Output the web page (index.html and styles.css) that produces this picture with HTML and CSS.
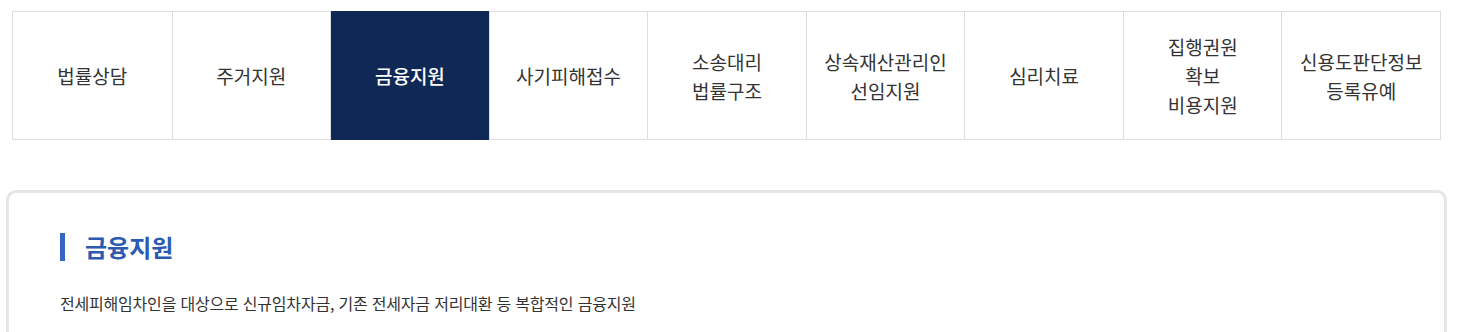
FILE: index.html
```html
<!DOCTYPE html>
<html lang="ko">

<head>
    <meta charset="UTF-8">
    <meta name="viewport" content="width=device-width, initial-scale=1.0">
    <title>금융지원</title>
    <link rel="stylesheet" href="styles.css">
</head>

<body>
    <section class="support-wrap">
        <ul class="support-tabs">
            <li><a href="#">법률상담</a></li>
            <li><a href="#">주거지원</a></li>
            <li class="on"><a href="#">금융지원</a></li>
            <li><a href="#">사기피해접수</a></li>
            <li><a href="#">소송대리<br>법률구조</a></li>
            <li><a href="#">상속재산관리인<br>선임지원</a></li>
            <li><a href="#">심리치료</a></li>
            <li><a href="#">집행권원<br>확보<br>비용지원</a></li>
            <li><a href="#">신용도판단정보<br>등록유예</a></li>
        </ul>

        <div class="support-box">
            <h3 class="support-title">금융지원</h3>
            <p class="support-desc">전세피해임차인을 대상으로 신규임차자금, 기존 전세자금 저리대환 등 복합적인 금융지원</p>
        </div>
    </section>
</body>

</html>
```

FILE: styles.css
```css
* {
    margin: 0;
    padding: 0;
    box-sizing: border-box;
}

body {
    font-family: "Noto Sans CJK KR", "Noto Sans", sans-serif;
    color: #333;
    background: #fff;
}

ul {
    list-style: none;
}

a {
    color: inherit;
    text-decoration: none;
}

.support-wrap {
    padding: 11px 14px 0 6px;
}

.support-tabs {
    display: grid;
    grid-template-columns: repeat(9, 1fr);
    height: 129px;
    margin: 0 6px 0 6px;
    border: 1px solid #dddddd;
}

.support-tabs>li {
    display: flex;
    align-items: center;
    justify-content: center;
    text-align: center;
    border-left: 1px solid #dddddd;
    font-size: 19px;
    line-height: 29px;
}

.support-tabs>li:first-child {
    border-left: 0;
}

.support-tabs>li.on {
    background: #0f2856;
    color: #fff;
    font-weight: 500;
    margin: -1px 0;
}

.support-box {
    margin-top: 50px;
    border: 3px solid #e6e6e6;
    border-radius: 10px;
    padding: 40px 51px 40px;
    min-height: 160px;
}

.support-title {
    font-size: 24px;
    line-height: 28px;
    color: #2b5bb0;
    font-weight: 700;
    padding-left: 20px;
    border-left: 5px solid #3566c1;
}

.support-desc {
    margin-top: 31px;
    font-size: 16px;
    line-height: 22px;
    letter-spacing: -0.2px;
    color: #333;
}
```
